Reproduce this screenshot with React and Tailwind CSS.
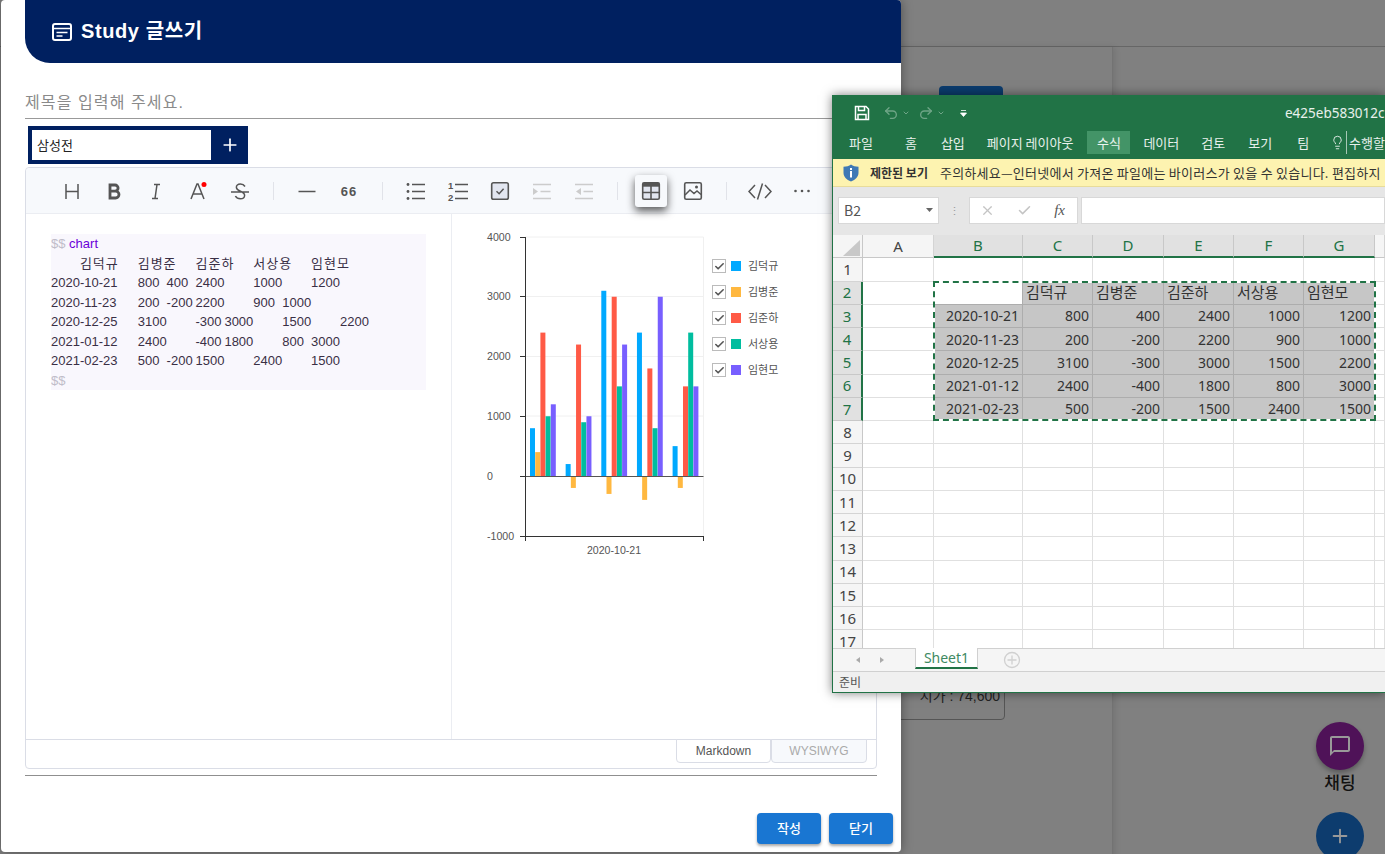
import React from 'react';
import { MdChatBubbleOutline } from 'react-icons/md';
import { Plus, Undo2, Redo2, Lightbulb, X, Check, ChevronDown } from 'lucide-react';

const series = [
    { name: '김덕규', color: '#00a9ff' },
    { name: '김병준', color: '#ffb840' },
    { name: '김준하', color: '#ff5a46' },
    { name: '서상용', color: '#00bd9f' },
    { name: '임현모', color: '#785fff' },
];

const sheetRows = [
    ['2020-10-21', 800, 400, 2400, 1000, 1200],
    ['2020-11-23', 200, -200, 2200, 900, 1000],
    ['2020-12-25', 3100, -300, 3000, 1500, 2200],
    ['2021-01-12', 2400, -400, 1800, 800, 3000],
    ['2021-02-23', 500, -200, 1500, 2400, 1500],
];

const codeLines = [
    '2020-10-21\t800\t400\t2400\t1000\t1200',
    '2020-11-23\t200\t-200\t2200\t900\t1000',
    '2020-12-25\t3100\t-300\t3000\t1500\t2200',
    '2021-01-12\t2400\t-400\t1800\t800\t3000',
    '2021-02-23\t500\t-200\t1500\t2400\t1500',
];

function Ico({ children }) {
    return (
        <svg width="24" height="24" viewBox="0 0 24 24" fill="none" stroke="#555" strokeWidth="1.5">
            {children}
        </svg>
    );
}

function ToolBtn({ children, active }) {
    return (
        <div className={active
            ? 'w-8 h-8 flex items-center justify-center rounded-[3px] bg-[#f7f9fc] shadow-[0_4px_8px_rgba(0,0,0,0.65)]'
            : 'w-8 h-8 flex items-center justify-center'}>
            {children}
        </div>
    );
}

function Sep() {
    return <div className="w-px h-[18px] mx-[17px] bg-[#e1e3e9]"></div>;
}

function Toolbar() {
    return (
        <div className="h-[46px] bg-[#f7f9fc] border-b border-[#ebedf2] flex items-center pl-[30px] rounded-t-[4px]">
            <div className="flex gap-[10px]">
                <ToolBtn><Ico><path d="M6 5v15M18 5v15M6 12.5h12" /></Ico></ToolBtn>
                <ToolBtn><Ico><path strokeWidth="2.8" d="M8 6h5a3 3 0 0 1 0 6.2H8zM8 12.2h5.6a3.4 3.4 0 0 1 0 6.8H8zM8 4.8v15.4" /></Ico></ToolBtn>
                <ToolBtn><Ico><path d="M10 5.5h6M8 19.5h6M13 5.5l-2 14" /></Ico></ToolBtn>
                <ToolBtn>
                    <Ico>
                        <path d="M5 20l6-15h1l6 15M7.5 15h9" />
                        <circle cx="18" cy="5.5" r="2.5" fill="#f00" stroke="none" />
                    </Ico>
                </ToolBtn>
                <ToolBtn><Ico><path d="M17 7.5c-1-1.6-2.6-2.4-4.6-2.4-2.6 0-4.2 1.4-4 3.4.2 4.5 8.4 3 8.2 8 -.1 2-1.9 3.3-4.2 3.3-2.3 0-4-1-5-2.8M3 13h18" /></Ico></ToolBtn>
            </div>
            <Sep />
            <div className="flex gap-[10px]">
                <ToolBtn><Ico><path d="M3.5 12.5h17" /></Ico></ToolBtn>
                <ToolBtn>
                    <span className="text-[#555] text-[13px] font-bold tracking-[1px] leading-none mt-[1px]">66</span>
                </ToolBtn>
            </div>
            <Sep />
            <div className="flex gap-[10px]">
                <ToolBtn>
                    <Ico>
                        <path d="M8 5.5h13M8 12.5h13M8 19.5h13" />
                        <circle cx="4" cy="5.5" r="1.4" fill="#555" stroke="none" />
                        <circle cx="4" cy="12.5" r="1.4" fill="#555" stroke="none" />
                        <circle cx="4" cy="19.5" r="1.4" fill="#555" stroke="none" />
                    </Ico>
                </ToolBtn>
                <ToolBtn>
                    <Ico>
                        <path d="M9 5.5h13M9 12.5h13M9 19.5h13" />
                        <text x="2" y="10" fontSize="9.5" fontWeight="700" fill="#555" stroke="none">1</text>
                        <text x="2" y="22" fontSize="9.5" fontWeight="700" fill="#555" stroke="none">2</text>
                    </Ico>
                </ToolBtn>
                <ToolBtn>
                    <Ico>
                        <rect x="3.7" y="3.7" width="16.6" height="16.6" rx="1.8" fill="#e2e6f0" strokeWidth="1.6" />
                        <path d="M8.5 12.3l2.6 2.4 4.5-5" />
                    </Ico>
                </ToolBtn>
                <ToolBtn>
                    <Ico>
                        <path stroke="#ccc" d="M3 5.5h18M10.5 12.5h10M3 19.5h18" />
                        <path fill="#ccc" stroke="none" d="M3 9l5 3.5-5 3.5z" />
                    </Ico>
                </ToolBtn>
                <ToolBtn>
                    <Ico>
                        <path stroke="#ccc" d="M3 5.5h18M11.5 12.5h9.5M3 19.5h18" />
                        <path fill="#ccc" stroke="none" d="M9 9l-5 3.5 5 3.5z" />
                    </Ico>
                </ToolBtn>
            </div>
            <Sep />
            <div className="flex gap-[10px]">
                <ToolBtn active>
                    <Ico>
                        <rect x="3.7" y="3.7" width="16.6" height="16.6" rx="1.5" fill="#e2e6f0" strokeWidth="1.6" />
                        <path fill="#555" stroke="none" d="M3.7 3.7h16.6v4H3.7z" />
                        <path strokeWidth="1.6" d="M3.7 13.5h16.6M12 7v13" />
                    </Ico>
                </ToolBtn>
                <ToolBtn>
                    <Ico>
                        <rect x="3.7" y="3.7" width="16.6" height="16.6" rx="1.5" strokeWidth="1.6" />
                        <path d="M4 16l5-5 4 3.5 3-2.5 4 3.5" />
                        <circle cx="15.5" cy="8" r="1.5" fill="#555" stroke="none" />
                    </Ico>
                </ToolBtn>
            </div>
            <Sep />
            <div className="flex gap-[10px]">
                <ToolBtn><Ico><path d="M7 6l-6 6.5L7 19M17 6l6 6.5L17 19M14.5 4.5l-5 16" /></Ico></ToolBtn>
                <ToolBtn>
                    <Ico>
                        <circle cx="5.5" cy="12" r="1.3" fill="#555" stroke="none" />
                        <circle cx="12" cy="12" r="1.3" fill="#555" stroke="none" />
                        <circle cx="18.5" cy="12" r="1.3" fill="#555" stroke="none" />
                    </Ico>
                </ToolBtn>
            </div>
        </div>
    );
}

function BarChart() {
    // zero line and scale are read off the picture, svg origin is (480, 230) on the page
    const zero = 246;
    const scale = 59.75 / 1000;
    return (
        <svg width="230" height="330" viewBox="0 0 230 330" className="shrink-0">
            {[7, 66.5, 126.5, 186].map((y) => (
                <line key={y} x1="45" x2="223.5" y1={y} y2={y} stroke="#f0f0f0" />
            ))}
            <line x1="223.5" x2="223.5" y1="7" y2="306" stroke="#f0f0f0" />
            {sheetRows.map((row, g) =>
                row.slice(1).map((v, i) => {
                    const h = Math.abs(v) * scale;
                    return (
                        <rect
                            key={g + '-' + i}
                            x={50 + g * 35.65 + i * 5.2}
                            y={v > 0 ? zero - h : zero}
                            width="5"
                            height={h}
                            fill={series[i].color}
                        />
                    );
                })
            )}
            <line x1="45" x2="223.5" y1={zero + 0.5} y2={zero + 0.5} stroke="#555" />
            <path d="M45.5 7v304M40 7.5h5M40 66.5h5M40 126.5h5M40 186.5h5M40 246.5h5M40 306.5h184M223.5 306v5" stroke="#333" fill="none" />
            <g fontSize="10.6" fill="#555" fontFamily="'Liberation Sans', sans-serif">
                <text x="7" y="11">4000</text>
                <text x="7" y="70">3000</text>
                <text x="7" y="130">2000</text>
                <text x="7" y="190">1000</text>
                <text x="7" y="250">0</text>
                <text x="7" y="310">-1000</text>
                <text x="134" y="324" textAnchor="middle">2020-10-21</text>
            </g>
        </svg>
    );
}

function Legend() {
    return (
        <div className="ml-[2px] pt-[23px]">
            {series.map((s) => (
                <div key={s.name} className="h-[26px] flex items-center">
                    <div className="w-[14px] h-[14px] border border-[#bbb] flex items-center justify-center">
                        <Check size={11} strokeWidth={3.5} color="#555" />
                    </div>
                    <div className="w-[10px] h-[10px] ml-[5px]" style={{ background: s.color }}></div>
                    <span className="ml-[7px] text-[11px] text-[#555]">{s.name}</span>
                </div>
            ))}
        </div>
    );
}

function Editor() {
    return (
        <div className="ml-[24px] w-[852px] h-[602px] mt-[3px] border border-[#dadde6] rounded-[4px] flex flex-col">
            <Toolbar />
            <div className="flex-1 flex min-h-0">
                <div className="w-[426px] border-r border-[#ebedf2] pl-[25px] pt-[20px]">
                    <div className="w-[375px] h-[156px] bg-[#f9f7fd] text-[13px] leading-[19.5px] text-[#3a2f45] whitespace-pre [tab-size:28.9px]">
                        <div><span className="text-[#c0bdc9]">$$</span> <span className="text-[#6a00d9]">chart</span></div>
                        <div className="tracking-[1px]">{'\t김덕규\t김병준\t김준하\t서상용\t임현모'}</div>
                        {codeLines.map((l) => <div key={l}>{l}</div>)}
                        <div className="text-[#c0bdc9]">$$</div>
                    </div>
                </div>
                <div className="flex-1 flex pl-[28px] pt-[16px]">
                    <BarChart />
                    <Legend />
                </div>
            </div>
            <div className="h-[29px] border-t border-[#dadde6] flex justify-end pr-[9px] text-[12px]">
                <div className="w-[95px] h-[24px] -mt-px bg-white border border-[#dadde6] rounded-b-[4px] flex items-center justify-center text-[#555]">Markdown</div>
                <div className="w-[96px] h-[24px] -mt-px bg-[#f7f9fc] border border-[#dadde6] rounded-b-[4px] flex items-center justify-center text-[#aaa]">WYSIWYG</div>
            </div>
        </div>
    );
}

function Dialog() {
    return (
        <div className="absolute left-px top-0 w-[900px] h-[852px] bg-white rounded-[4px] flex flex-col shadow-[0_0_12px_rgba(0,0,0,0.4)]">
            <div className="ml-[24px] h-[63px] bg-[#002060] rounded-bl-[25px] rounded-tr-[4px] flex items-center pl-[27px]">
                <svg width="20" height="20" viewBox="0 0 20 20" fill="none" stroke="#fff" strokeWidth="2">
                    <rect x="1" y="2" width="18" height="16" rx="2" />
                    <path d="M1 6.5h18" strokeWidth="1.5" />
                    <path d="M4.5 10.5h11M4.5 14h6" strokeWidth="1.6" />
                </svg>
                <span className="ml-[9px] -mt-[2px] text-white text-[20px] font-bold tracking-[0.6px]">Study 글쓰기</span>
            </div>
            <div className="ml-[24px] w-[852px] h-[56px] border-b border-[#999] flex items-end pb-[3px]">
                <input
                    placeholder="제목을 입력해 주세요."
                    className="w-full outline-none text-[16px] tracking-[1.1px] placeholder:text-[#8a8a8a]"
                />
            </div>
            <div className="ml-[27px] mt-[7px] w-[220px] h-[38px] bg-[#002060] flex items-center pl-[4px]">
                <div className="w-[179px] h-[30px] bg-white flex items-center pl-[5px] pt-[1px] text-[13px] text-[#222]">삼성전</div>
                <div className="flex-1 flex justify-center"><Plus size={20} color="#fff" strokeWidth={2} /></div>
            </div>
            <Editor />
            <div className="ml-[24px] w-[852px] h-px mt-[6px] bg-[#8f8f8f]"></div>
            <div className="flex justify-end gap-2 pr-[8px] mt-[37px]">
                <button className="w-16 h-[31px] rounded-[4px] bg-[#1976d2] text-white text-[13px] font-medium shadow-[0_2px_3px_rgba(0,0,0,0.35)]">작성</button>
                <button className="w-16 h-[31px] rounded-[4px] bg-[#1976d2] text-white text-[13px] font-medium shadow-[0_2px_3px_rgba(0,0,0,0.35)]">닫기</button>
            </div>
        </div>
    );
}

function RibbonTab({ label }) {
    return <span className="text-[13px] text-white/90">{label}</span>;
}

function ColHead({ label, on }) {
    return (
        <div className={on
            ? 'bg-[#e1e1e1] border-r border-[#c8c8c8] border-b-2 border-b-[#217346] text-[#217346] flex items-center justify-center text-[15px]'
            : 'bg-[#f5f5f5] border-r border-[#d4d4d4] border-b border-b-[#c8c8c8] text-[#444] flex items-center justify-center text-[15px]'}>
            {label}
        </div>
    );
}

function RowHead({ n, on }) {
    return (
        <div className={on
            ? 'bg-[#e1e1e1] border-b border-[#c8c8c8] border-r-2 border-r-[#217346] text-[#217346] flex items-center justify-center text-[15px]'
            : 'bg-[#f5f5f5] border-b border-[#d4d4d4] border-r border-r-[#c8c8c8] text-[#444] flex items-center justify-center text-[15px]'}>
            {n}
        </div>
    );
}

function Blank() {
    return <div className="border-r border-b border-[#e0e0e0]"></div>;
}

function Gray({ children, left, white }) {
    return (
        <div className={(white ? 'bg-white ' : 'bg-[#c6c6c6] ')
            + 'border-r border-b border-[#adadad] text-[#333] flex items-center px-[3px] '
            + (left ? 'justify-start text-[15px]' : 'justify-end text-[14px]')}>
            {children}
        </div>
    );
}

function Sheet() {
    const empties = [8, 9, 10, 11, 12, 13, 14, 15, 16, 17, 18];
    return (
        <div className="relative h-[413px] overflow-hidden bg-white [font-family:'Noto_Sans','Noto_Sans_CJK_KR',sans-serif]">
            <div className="grid grid-cols-[30px_71px_89px_70px_71px_70px_70px_71px_1fr] auto-rows-[23.25px]">
                <div className="bg-[#f5f5f5] border-r border-b border-[#c8c8c8] relative overflow-hidden">
                    <svg width="29" height="23" viewBox="0 0 29 23"><path d="M27 5v16H10z" fill="#c8c8c8" /></svg>
                </div>
                <ColHead label="A" />
                {['B', 'C', 'D', 'E', 'F', 'G'].map((c) => <ColHead key={c} label={c} on />)}
                <ColHead label="" />

                <RowHead n={1} />
                {[0, 1, 2, 3, 4, 5, 6, 7].map((i) => <Blank key={i} />)}

                <RowHead n={2} on />
                <Blank />
                <Gray white />
                {series.map((s) => <Gray key={s.name} left>{s.name}</Gray>)}
                <Blank />

                {sheetRows.map((row, i) => (
                    <React.Fragment key={row[0]}>
                        <RowHead n={i + 3} on />
                        <Blank />
                        {row.map((v, j) => <Gray key={j}>{v}</Gray>)}
                        <Blank />
                    </React.Fragment>
                ))}

                {empties.map((n) => (
                    <React.Fragment key={n}>
                        <RowHead n={n} />
                        {[0, 1, 2, 3, 4, 5, 6, 7].map((i) => <Blank key={i} />)}
                    </React.Fragment>
                ))}
            </div>
            {/* marching ants of the copied range */}
            <div className="absolute left-[100px] top-[46px] w-[443px] h-[140px] border-2 border-white pointer-events-none">
                <div className="absolute -inset-[2px] border-2 border-dashed border-[#217346]"></div>
            </div>
        </div>
    );
}

function ExcelWindow() {
    return (
        <div className="absolute left-[832px] top-[95px] w-[553px] h-[598px] bg-[#e6e6e6] border-l border-t border-b border-[#217346] flex flex-col shadow-[0_0_10px_rgba(0,0,0,0.5)] [font-family:'Noto_Sans_CJK_KR','Noto_Sans',sans-serif]">
            <div className="h-[63px] bg-[#217346] flex flex-col">
                <div className="h-[34px] flex items-center pl-[21px]">
                    <svg width="16" height="16" viewBox="0 0 16 16" fill="none" stroke="#fff" strokeWidth="1.5" className="shrink-0">
                        <path d="M1.5 1.5h10.5l2.500 2.500v10.500h-13z" />
                        <path d="M4.500 1.500v4h6v-4M4 14.500v-5h8v5" />
                    </svg>
                    <Undo2 size={16} color="#6fa587" className="ml-[13px] shrink-0" />
                    <ChevronDown size={8} color="#6fa587" strokeWidth={3} className="ml-[3px] shrink-0" />
                    <Redo2 size={16} color="#6fa587" className="ml-[8px] shrink-0" />
                    <ChevronDown size={8} color="#6fa587" strokeWidth={3} className="ml-[3px] shrink-0" />
                    <svg width="7" height="8" viewBox="0 0 7 8" className="ml-[15px] shrink-0">
                        <path d="M1 1.500h5M0.500 4h6L3.500 7.500z" stroke="#fff" strokeWidth="0.8" fill="#fff" />
                    </svg>
                    <span className="ml-[318px] text-[13.5px] text-white/90 whitespace-nowrap [font-family:'Noto_Sans',sans-serif]">e425eb583012c153</span>
                </div>
                <div className="h-[29px] flex items-start pt-[1px] pl-[16px] whitespace-nowrap">
                    <div className="h-[23px] flex items-center"><RibbonTab label="파일" /></div>
                    <div className="h-[23px] flex items-center ml-[32px]"><RibbonTab label="홈" /></div>
                    <div className="h-[23px] flex items-center ml-[24px]"><RibbonTab label="삽입" /></div>
                    <div className="h-[23px] flex items-center ml-[22px]"><RibbonTab label="페이지 레이아웃" /></div>
                    <div className="h-[23px] w-[46px] ml-[14px] flex items-center justify-center bg-[#439467]"><RibbonTab label="수식" /></div>
                    <div className="h-[23px] flex items-center ml-[13px]"><RibbonTab label="데이터" /></div>
                    <div className="h-[23px] flex items-center ml-[22px]"><RibbonTab label="검토" /></div>
                    <div className="h-[23px] flex items-center ml-[23px]"><RibbonTab label="보기" /></div>
                    <div className="h-[23px] flex items-center ml-[25px]"><RibbonTab label="팀" /></div>
                    <div className="h-[23px] flex items-center ml-[21px]"><Lightbulb size={15} color="#fff" strokeWidth={1.3} /></div>
                    <div className="h-[23px] flex items-center ml-px border-l border-white/60 pl-[2px]"><RibbonTab label="수행할" /></div>
                </div>
            </div>
            <div className="h-[28px] bg-[#fdf3b0] border-b border-[#e8dc9a] flex items-center pl-[10px] text-[#333] whitespace-nowrap">
                <svg width="16" height="18" viewBox="0 0 16 18" className="shrink-0">
                    <path d="M8 0.500c2 1.400 4.500 2.200 7.500 2.300v6c0 4-3 7-7.500 8.700C3.500 15.800 0.500 12.800 0.500 8.800v-6C3.500 2.700 6 1.900 8 0.500z" fill="#3f79b5" />
                    <rect x="7" y="7" width="2" height="6.500" fill="#fff" />
                    <rect x="7" y="4" width="2" height="2" fill="#fff" />
                </svg>
                <span className="ml-[11px] text-[12px] font-bold">제한된 보기</span>
                <span className="ml-[12px] text-[13px] tracking-[0.25px]">주의하세요—인터넷에서 가져온 파일에는 바이러스가 있을 수 있습니다. 편집하지</span>
            </div>
            <div className="h-[48px] flex items-center pl-[5px] pb-[2px]">
                <div className="w-[101px] h-[27px] bg-white border border-[#d8d8d8] flex items-center justify-between pl-[5px] pr-[5px] text-[14px] text-[#555]">
                    B2
                    <svg width="7" height="4" viewBox="0 0 7 4"><path d="M0 0h7L3.500 4z" fill="#666" /></svg>
                </div>
                <span className="w-[30px] text-center text-[#999] text-[11px] leading-none">⋮</span>
                <div className="w-[109px] h-[27px] bg-white border border-[#d8d8d8] flex items-center justify-between pl-[10px] pr-[12px]">
                    <X size={15} color="#c4c4c4" strokeWidth={2} />
                    <Check size={15} color="#c4c4c4" strokeWidth={2.500} />
                    <span className="text-[15px] italic text-[#555] [font-family:'Liberation_Serif',serif]">fx</span>
                </div>
                <div className="flex-1 h-[27px] ml-[3px] bg-white border border-[#d8d8d8]"></div>
            </div>
            <Sheet />
            <div className="h-[24px] bg-[#f5f5f5] border-t border-b border-[#d0d0d0] flex relative text-[#aaa]">
                <svg width="40" height="22" viewBox="0 0 40 22" className="ml-[20px]">
                    <path d="M7 8l-4 3 4 3z" fill="#aaa" />
                    <path d="M27 8l4 3-4 3z" fill="#aaa" />
                </svg>
                <div className="ml-[22px] w-[63px] h-[21px] -mt-px bg-white border-l border-r border-[#d0d0d0] border-b-2 border-b-[#217346] flex items-center justify-center text-[14px] text-[#3f8a63] [font-family:'Noto_Sans',sans-serif]">Sheet1</div>
                <svg width="18" height="18" viewBox="0 0 18 18" fill="none" stroke="#d0d0d0" strokeWidth="1.300" className="ml-[25px] mt-[2px]">
                    <circle cx="9" cy="9" r="7.500" />
                    <path d="M9 4.500v9M4.500 9h9" />
                </svg>
            </div>
            <div className="flex-1 bg-[#f0f0f0] flex items-center pl-[6px] text-[12px] text-[#555]">준비</div>
        </div>
    );
}

function Backdrop() {
    return (
        <div className="w-full h-full bg-[#808080] flex flex-col">
            <div className="h-[47px] border-b border-[#666] shrink-0"></div>
            <div className="flex-1 flex">
                <div className="w-[1113px] shrink-0 border-r border-[#737373] shadow-[2px_0_6px_rgba(0,0,0,0.1)] pl-[939px] pt-[39px]">
                    <div className="w-[64px] h-[30px] pt-[7px] rounded-[4px] bg-[#0b3c6e] text-center text-[12px] text-[#999]">매수</div>
                    <div className="w-[200px] h-[110px] -ml-[134px] mt-[494px] border border-[#555] rounded-[4px] flex items-end justify-end pr-[4px] pb-[13px] text-[14px] leading-[20px] text-[#222] whitespace-nowrap">시가 : 74,600</div>
                </div>
                <div className="flex-1 flex flex-col items-center pl-[182px] pt-[675px]">
                    <div className="w-12 h-12 shrink-0 rounded-full bg-[#4f1258] flex items-center justify-center shadow-[0_3px_5px_rgba(0,0,0,0.3)]">
                        <MdChatBubbleOutline size={24} color="#999" />
                    </div>
                    <div className="mt-[2px] text-[17px] font-medium text-[#111] leading-[24px] whitespace-nowrap">채팅</div>
                    <div className="w-12 h-12 shrink-0 mt-[16px] rounded-full bg-[#0d3c6e] flex items-center justify-center">
                        <Plus size={22} color="#999" strokeWidth={2} />
                    </div>
                </div>
            </div>
        </div>
    );
}

export default function App() {
    return (
        <div className="relative w-[1385px] h-[854px] overflow-hidden [font-family:'Liberation_Sans','Noto_Sans_CJK_KR',sans-serif]">
            <Backdrop />
            <Dialog />
            <ExcelWindow />
        </div>
    );
}
